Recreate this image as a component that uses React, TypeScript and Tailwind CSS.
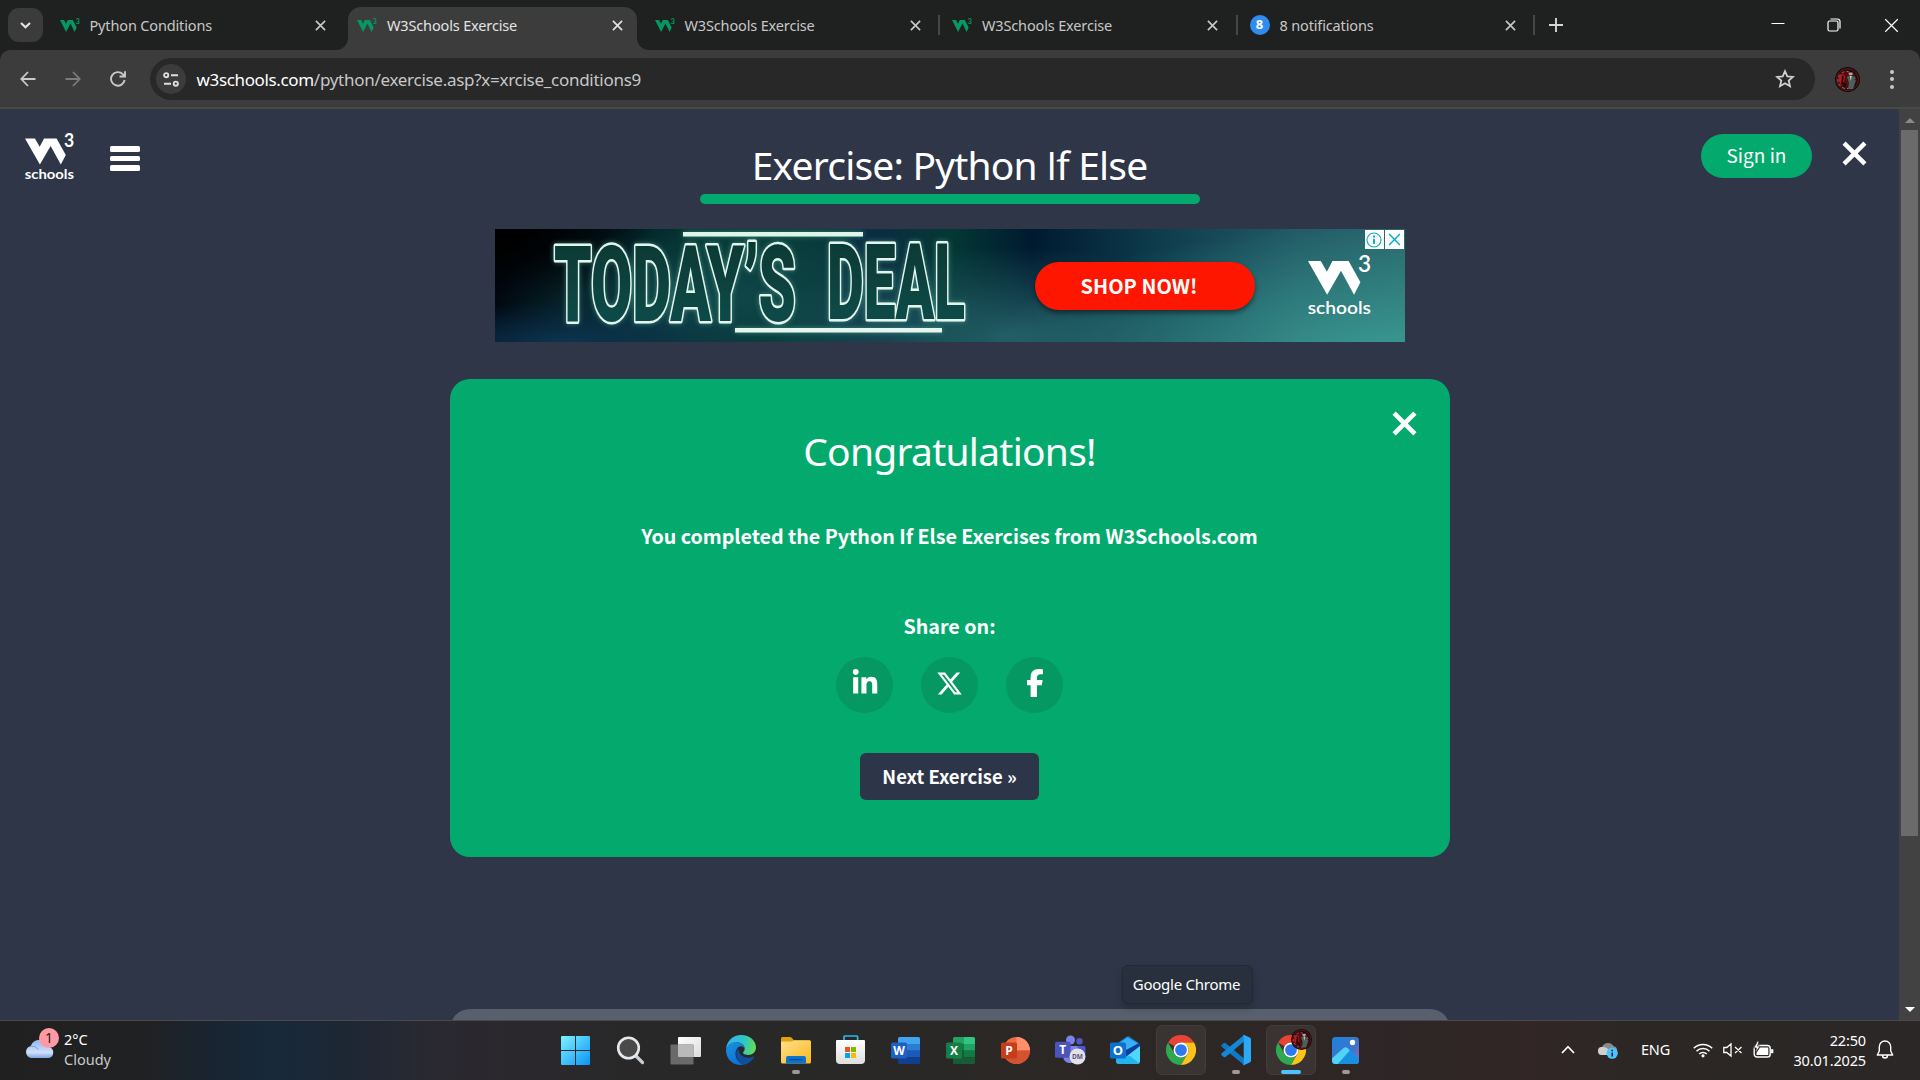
import React from "react";
import { FaXTwitter, FaFacebookF, FaLinkedinIn } from "react-icons/fa6";

const ui = "font-['Noto_Sans',sans-serif]";
const source = "font-['Noto_Sans_CJK_SC',sans-serif]";

function W3Mark({ className, full = false, bold = false }: { className: string; full?: boolean; bold?: boolean }) {
  return (
    <svg className={`overflow-visible ${className}`} viewBox={full ? "0 0 62.5 60" : "0 0 62.5 40"} preserveAspectRatio="none" fill="currentColor">
      <polygon points="0,6 12.7,6 18.7,16.7 24.3,6 40.3,6 52,27.3 45.7,39.7 32.7,15.7 19,39.7" />
      <text x="49.6" y="17.3" fontSize="23.5" fontWeight={bold ? 700 : 600} fontFamily="Lato, sans-serif" textLength="13" lengthAdjust="spacingAndGlyphs">3</text>
      {full && (
        <text x="-0.3" y="59" fontSize="17" fontWeight={bold ? 700 : 600} fontFamily="Lato, sans-serif" textLength="62.8" lengthAdjust="spacingAndGlyphs">schools</text>
      )}
    </svg>
  );
}

function Cross({ className, width = 2 }: { className: string; width?: number }) {
  return (
    <svg className={className} viewBox="0 0 24 24" stroke="currentColor" strokeWidth={width} fill="none">
      <path d="M2 2 22 22M22 2 2 22" />
    </svg>
  );
}

function Tab({ title, active, divider, badge }: { title: string; active?: boolean; divider?: boolean; badge?: boolean }) {
  return (
    <div className="relative h-full w-[297.5px] shrink-0">
      {active && (
        <>
          <div className="absolute left-0 top-[7px] h-[43px] w-[289px] rounded-t-[13px] bg-[#3c3c3c]" />
          <svg className="absolute -left-[12px] bottom-0 h-3 w-3" viewBox="0 0 12 12"><path d="M12 0v12H0A12 12 0 0 0 12 0Z" fill="#3c3c3c" /></svg>
          <svg className="absolute left-[289px] bottom-0 h-3 w-3" viewBox="0 0 12 12"><path d="M0 0v12H12A12 12 0 0 1 0 0Z" fill="#3c3c3c" /></svg>
        </>
      )}
      {divider && <div className="absolute -left-[5px] top-[15px] h-[20px] w-[2px] bg-[#464746]" />}
      <div className={`relative flex h-full items-center pl-[9px] ${active ? "text-[#e3e3e3]" : "text-[#c7c7c7]"}`}>
        {badge ? (
          <div className="flex h-5 w-5 items-center justify-center rounded-full bg-[#2f8cf0] text-[13px] font-bold text-white">8</div>
        ) : (
          <W3Mark bold className="h-[14px] w-5 text-[#059862]" />
        )}
        <span className="ml-[10px] w-[225px] whitespace-nowrap pt-[2px] text-[14.5px] tracking-[-0.15px]">{title}</span>
        <Cross className="h-[11px] w-[11px]" width={3.6} />
      </div>
    </div>
  );
}

function Avatar({ className }: { className: string }) {
  return (
    <svg className={className} viewBox="0 0 25 25">
      <circle cx="12.5" cy="12.5" r="12.5" fill="#140808" />
      <circle cx="12.5" cy="12.5" r="11" fill="#2a0b0e" stroke="#7d1c20" strokeWidth="0.8" />
      <circle cx="11.5" cy="13" r="8.6" fill="#560b0f" stroke="#8f8080" strokeWidth="0.9" strokeDasharray="3 2" />
      <path d="M4 9c3-3 5-2 6 1l-2 9c-3-1-5-5-4-10Z" fill="#c5161b" />
      <path d="m7 8 2 2-1 5 3 2-1 4-4-4Z" fill="#1d0a0c" />
      <circle cx="15.6" cy="6.6" r="2" fill="#c99a92" />
      <path d="M13.6 5.6c0-3 4-3 4.200 0Z" fill="#111" />
      <path d="M12 10c2-2 5-2 7 0l1 6-2 6h-5l1-6Z" fill="#48635f" />
      <path d="M15 9l.8 5 .8-5Z" fill="#dde4e2" />
    </svg>
  );
}

function TitleBar() {
  return (
    <div className="flex h-[50px] shrink-0 bg-[#1f2120]">
      <div className="w-[50.5px] shrink-0 pl-2 pt-2">
        <div className="flex h-[34px] w-[35px] items-center justify-center rounded-[11px] bg-[#3a3b3a]">
          <svg className="h-[7px] w-[11px]" viewBox="0 0 11 7" fill="none" stroke="#e3e3e3" strokeWidth="2.200"><path d="M1 1l4.500 4.300L10 1" /></svg>
        </div>
      </div>
      <Tab title="Python Conditions" />
      <Tab title="W3Schools Exercise" active />
      <Tab title="W3Schools Exercise" />
      <Tab title="W3Schools Exercise" divider />
      <Tab title="8 notifications" divider badge />
      <div className="relative flex flex-1 items-center">
        <div className="absolute -left-[5px] top-[15px] h-[20px] w-[2px] bg-[#464746]" />
        <svg className="ml-[10.500px] h-[14px] w-[14px]" viewBox="0 0 14 14" stroke="#d5d5d5" strokeWidth="1.900"><path d="M7 0v14M0 7h14" /></svg>
        <div className="ml-auto flex text-white">
          <div className="flex w-[57px] justify-center"><svg className="h-[14px] w-[14px]" viewBox="0 0 14 14" stroke="#fff" strokeWidth="1"><path d="M.500 5.500h13" /></svg></div>
          <div className="flex w-[57px] justify-center pr-[2px]">
            <svg className="h-[14px] w-[14px]" viewBox="0 0 14 14" fill="none" stroke="#fff" strokeWidth="1.200"><rect x="1" y="3" width="10" height="10" rx="1.500" /><path d="M3.500 1h7A2.500 2.500 0 0 1 13 3.500v7" /></svg>
          </div>
          <div className="flex w-[57px] justify-center"><Cross className="h-[15px] w-[15px]" width={1.9} /></div>
        </div>
      </div>
    </div>
  );
}

function Toolbar() {
  return (
    <div className="h-[59px] shrink-0 bg-[#1f2120]">
      <div className="flex h-full items-start rounded-t-[10px] border-b-2 border-[#474a45] bg-[#3c3c3c] pt-2">
        <div className="flex h-[42px] w-[150px] items-center pl-[5px]">
          <div className="flex w-[45px] justify-center">
            <svg className="h-4 w-4" viewBox="0 0 16 16" fill="none" stroke="#c9c9c9" strokeWidth="1.800"><path d="M15.500 8H1.500M8 1 1.300 8 8 15" /></svg>
          </div>
          <div className="flex w-[45px] justify-center">
            <svg className="h-4 w-4" viewBox="0 0 16 16" fill="none" stroke="#7b7b7b" strokeWidth="1.800"><path d="M.500 8H14.500M8 1l6.700 7L8 15" /></svg>
          </div>
          <div className="flex w-[45px] justify-center">
            <svg className="h-4 w-4" viewBox="0 0 16 16" fill="none" stroke="#c9c9c9" strokeWidth="1.900"><path d="M14.600 9A6.800 6.800 0 1 1 12.800 3.200L15 5.300M15 .300v5.200H9.500" /></svg>
          </div>
        </div>
        <div className="flex h-[42px] w-[1665px] items-center rounded-full bg-[#282828] pl-[6px] pr-[20px]">
          <div className="flex h-[30px] w-[30px] items-center justify-center rounded-full bg-[#3c3c3c]">
            <svg className="h-[15px] w-[16px]" viewBox="0 0 16 15" fill="none" stroke="#dedede" strokeWidth="1.900"><circle cx="3.200" cy="3.200" r="2.100" /><path d="M8 3.200h7M1 11.700h7" /><circle cx="12.800" cy="11.700" r="2.100" /></svg>
          </div>
          <div className="ml-[10.500px] whitespace-nowrap pt-[2px] text-[17px] tracking-[-0.28px] text-[#c7c7c7]">
            <span className="tracking-[-0.35px] text-white">w3schools.com</span>/python/exercise.asp?x=xrcise_conditions9
          </div>
          <svg className="ml-auto h-5 w-5" viewBox="0 0 20 20" fill="none" stroke="#d0d0d0" strokeWidth="1.800"><path d="M10 2.200l2.300 5.200 5.700.500-4.300 3.700 1.300 5.600L10 14.300l-5 2.900 1.300-5.600L2 7.900l5.700-.500Z" /></svg>
        </div>
        <div className="flex h-[42px] flex-1 items-center">
          <Avatar className="ml-5 h-[25px] w-[25px]" />
          <div className="ml-[30px] flex flex-col gap-[3.500px]">
            {[0, 1, 2].map((i) => <div key={i} className="h-[4px] w-[4px] rounded-full bg-[#c9c9c9]" />)}
          </div>
        </div>
      </div>
    </div>
  );
}

function Banner() {
  return (
    <div className="relative mx-auto flex h-[113px] w-[910px] shrink-0 overflow-hidden bg-[radial-gradient(420px_130px_at_100%_110%,#3a9992_0%,#3a999200_100%),radial-gradient(160px_80px_at_0%_0%,#000_20%,#0000_100%),radial-gradient(200px_40px_at_8%_100%,#0c3450_0%,#0c345000_100%),radial-gradient(240px_90px_at_56%_95%,#225c64_0%,#225c6400_100%),radial-gradient(220px_75px_at_24%_60%,#11474a_0%,#11474a00_100%),linear-gradient(90deg,#010812_0%,#01161f_12%,#043431_22%,#063b38_34%,#0c2c42_42%,#043834_50%,#001a30_59%,#0d3a4b_72%,#225a65_88%,#28666b_100%)]">
      <svg className="h-[113px] w-[500px] shrink-0" viewBox="0 0 500 113">
        <defs>
          <filter id="neon" filterUnits="userSpaceOnUse" x="0" y="0" width="500" height="113">
            <feGaussianBlur in="SourceGraphic" stdDeviation="2.6" result="b" />
            <feColorMatrix in="b" values="0 0 0 0 .12  0 0 0 0 .62  0 0 0 0 .46  0 0 0 .5 0" result="g" />
            <feMerge><feMergeNode in="g" /><feMergeNode in="SourceGraphic" /></feMerge>
          </filter>
          <linearGradient id="tube" x1="0" y1="0" x2="0" y2="1"><stop stopColor="#04352f" /><stop offset="1" stopColor="#12504f" /></linearGradient>
        </defs>
        <rect x="188" y="3" width="180" height="4.500" fill="#dff5ea" filter="url(#neon)" />
        <rect x="240" y="99" width="207" height="4.500" fill="#e6f5ee" filter="url(#neon)" />
        <g fill="url(#tube)" stroke="#e4f5ee" strokeWidth="5" paintOrder="stroke" strokeLinejoin="round" filter="url(#neon)" fontFamily="Roboto, sans-serif" fontWeight="900" fontSize="105">
          <text x="59" y="92" textLength="242" lengthAdjust="spacingAndGlyphs">TODAY’S</text>
          <text x="332" y="90" textLength="138" lengthAdjust="spacingAndGlyphs">DEAL</text>
        </g>
      </svg>
      <div className={`${source} ml-10 mt-[33px] flex h-[48px] w-[220px] shrink-0 items-center justify-center rounded-full bg-[#ff1600] pr-[11px] text-[20px] font-bold leading-none text-white shadow-[0_3px_5px_#0007]`}>SHOP NOW!</div>
      <W3Mark full className="ml-[53.500px] mt-[26px] h-[60px] w-[63px] shrink-0 text-white" />
      <div className="absolute right-[1px] top-[1px] flex gap-px">
        <div className="flex h-[19px] w-[19px] items-center justify-center bg-white">
          <svg className="h-4 w-4" viewBox="0 0 16 16" fill="none" stroke="#00aecd"><circle cx="8" cy="8" r="7" strokeWidth="1.100" /><path d="M8 6.700V12M8 3.500v1.900" strokeWidth="1.900" /></svg>
        </div>
        <div className="flex h-[19px] w-[19px] items-center justify-center bg-white text-[#00aecd]"><Cross className="h-[13px] w-[13px]" width={2.6} /></div>
      </div>
    </div>
  );
}

function Card() {
  const circle = "flex h-[56px] w-[57px] items-center justify-center rounded-full bg-[#059862] pb-1";
  return (
    <div className="relative mx-auto mt-[37px] flex h-[478px] w-[1000px] shrink-0 flex-col items-center rounded-[20px] bg-[#04aa6d] text-white">
      <Cross className="absolute right-[33px] top-[32px] h-[25px] w-[25px]" width={4.4} />
      <h2 className={`${ui} mt-[47px] h-[50px] text-[39px] font-normal leading-[50px] tracking-[-0.75px]`}>Congratulations!</h2>
      <p className={`${source} mt-[46px] h-[28px] text-[19.700px] font-bold leading-[28px] tracking-[-0.03px]`}>You completed the Python If Else Exercises from W3Schools.com</p>
      <p className={`${source} mt-[62px] h-[28px] text-[19.700px] font-bold leading-[28px]`}>Share on:</p>
      <div className="mt-[17px] flex gap-7">
        <div className={circle}><FaLinkedinIn className="h-[28px] w-[28px]" /></div>
        <div className={circle}><FaXTwitter className="h-[27px] w-[27px]" /></div>
        <div className={circle}><FaFacebookF className="h-[28px] w-[28px]" /></div>
      </div>
      <div className={`${source} mt-[40px] flex h-[47px] w-[179px] items-center justify-center rounded-[6px] bg-[#2d3648] text-[18.500px] font-bold`}>Next Exercise »</div>
    </div>
  );
}

function Page() {
  return (
    <div className="flex h-[911px] shrink-0 bg-[#2e3648]">
      <div className="relative flex w-[1899px] flex-col overflow-hidden">
        <div className="flex h-[120px] shrink-0 items-start justify-between">
          <div className="flex w-[250px] text-white">
            <W3Mark full bold className="ml-[24.500px] mt-[25px] h-[46px] w-[49px]" />
            <div className="ml-[36.500px] mt-[37px] flex flex-col gap-1">
              {[0, 1, 2].map((i) => <div key={i} className="h-[5.500px] w-[30px] rounded-[1.500px] bg-white" />)}
            </div>
          </div>
          <div className="flex w-[500px] flex-col items-center">
            <h1 className={`${ui} mt-[28px] h-[57px] whitespace-nowrap text-[39px] leading-[55px] tracking-[-0.82px] text-white`}>
              Exercise: Python <span className="font-['Open_Sans',sans-serif]">I</span>f Else
            </h1>
            <div className="h-[10px] w-full rounded-[5px] bg-[#04aa6d]" />
          </div>
          <div className="flex w-[250px] justify-end text-white">
            <div className={`${source} mt-[25px] flex h-[44px] w-[111px] items-center justify-center rounded-full bg-[#04aa6d] pb-[2px] text-[19px]`}>Sign in</div>
            <Cross className="ml-[30px] mr-[32px] mt-[32px] h-[25px] w-[25px]" width={4.2} />
          </div>
        </div>
        <Banner />
        <Card />
        <div className="mx-auto mt-[152px] h-[60px] w-[1000px] shrink-0 rounded-t-[20px] bg-[#585f6d]" />
        <div className={`${ui} absolute left-[1122px] top-[856px] flex h-[39px] w-[131px] items-center justify-center rounded-[6px] border border-[#212934] bg-[#29303d] pr-[2px] text-[15px] tracking-[-0.25px] text-white shadow-[0_4px_8px_#0003]`}>Google Chrome</div>
      </div>
      <div className="flex w-[21px] flex-col items-center bg-[#424242]">
        <svg className="mt-[9px] h-[5px] w-[10px]" viewBox="0 0 10 5"><path d="M0 5 5 0l5 5Z" fill="#8a8a8a" /></svg>
        <div className="mt-[7px] h-[706px] w-[17px] bg-[#6b6b6b]" />
        <svg className="mb-[8px] mt-auto h-[5px] w-[10px]" viewBox="0 0 10 5"><path d="M0 0 5 5l5-5Z" fill="#fff" /></svg>
      </div>
    </div>
  );
}

function StartIcon() {
  return (
    <svg className="h-[29px] w-[29px]" viewBox="0 0 29 29">
      <defs><linearGradient id="st" x1="0" y1="0" x2="29" y2="29" gradientUnits="userSpaceOnUse"><stop stopColor="#7df3ff" /><stop offset=".5" stopColor="#45c2fb" /><stop offset="1" stopColor="#0a94f8" /></linearGradient></defs>
      <path fill="url(#st)" d="M1 0h13v14H0V1q0-1 1-1ZM15 0h13q1 0 1 1v13H15ZM0 15h14v14H1q-1 0-1-1ZM15 15h14v13q0 1-1 1H15Z" />
    </svg>
  );
}

function SearchIcon() {
  return (
    <svg className="h-[29px] w-[29px]" viewBox="0 0 29 29" fill="none">
      <path d="m20 20 6.500 6.500" stroke="#c9ced4" strokeWidth="3.200" strokeLinecap="round" />
      <circle cx="12.500" cy="12" r="10.300" fill="#4a4a4a" stroke="#e6e9ec" strokeWidth="2.600" />
    </svg>
  );
}

function TaskViewIcon() {
  return (
    <svg className="h-[29px] w-[31px]" viewBox="0 0 31 29">
      <defs><linearGradient id="tv" x1="0" y1="0" x2="1" y2="1"><stop stopColor="#fff" /><stop offset="1" stopColor="#dcdcdc" /></linearGradient></defs>
      <rect x="8" y="1" width="23" height="20" rx="1" fill="url(#tv)" />
      <rect x="0.500" y="8.500" width="23" height="20" rx="1" fill="#6a6a6a" />
      <path d="M8 8.500h15.500V21H9q-1 0-1-1Z" fill="#b9b9b9" />
    </svg>
  );
}

function EdgeIcon() {
  return (
    <svg className="h-[30px] w-[30px]" viewBox="0 0 30 30">
      <defs>
        <linearGradient id="eg" x1="0" y1="8" x2="30" y2="14" gradientUnits="userSpaceOnUse"><stop stopColor="#33b4ee" /><stop offset=".55" stopColor="#2dc4c8" /><stop offset="1" stopColor="#66e04a" /></linearGradient>
        <linearGradient id="eb" x1="0" y1="10" x2="14" y2="30" gradientUnits="userSpaceOnUse"><stop stopColor="#1b8ee0" /><stop offset="1" stopColor="#0a6fd2" /></linearGradient>
      </defs>
      <path d="M0 14.500C.500 6 7 0 15.200 0 24 0 30 6 30 12.500c0 4.500-3.500 7.500-7.800 7.500-3 0-5.200-1-5.200-2.200 0-1 1.700-1.500 1.700-4C18.700 9 13 6.500 9 7.300 4.500 8.200 1 11 0 14.500Z" fill="url(#eg)" />
      <path d="M0 15C.300 10.500 5 7 9.800 7c4.700 0 8.900 3 8.900 6.800-.700-1.600-2-2.500-3.600-2.500-3 0-5.600 3-5.600 7.700 0 5 4 9.500 8.500 10.500C8.500 32 0 25 0 15Z" fill="url(#eb)" />
      <path d="M12 13c-4 6-1 15 6 16.500 4-.700 8-3.500 10-7.300.300-.700-.300-1-1-.700-5 2.600-11.500.800-14-4.500-.500-1.300-.500-2.600-1-4Z" fill="#104f9e" />
    </svg>
  );
}

function ExplorerIcon() {
  return (
    <svg className="h-[28px] w-[30px]" viewBox="0 0 30 28">
      <defs><linearGradient id="ex" x1="0" y1="0" x2="1" y2="1"><stop stopColor="#ffe08a" /><stop offset="1" stopColor="#fbb81e" /></linearGradient></defs>
      <path d="M0 2.500Q0 1 1.500 1H9q1 0 2 1l2 2.500h15.500Q30 4.500 30 6v4H0Z" fill="#e2a00c" />
      <path d="M0 5.500h11l2-1.300h15.500q1.500 0 1.500 1.500V26q0 1.500-1.500 1.500h-27Q0 27.500 0 26Z" fill="url(#ex)" />
      <path d="M5 27.500V22q0-2 2-2h16q2 0 2 2v5.500Z" fill="#0c74cf" />
      <path d="M9 23.600h12" stroke="#084d93" strokeWidth="1.300" strokeLinecap="round" />
    </svg>
  );
}

function StoreIcon() {
  return (
    <svg className="h-[30px] w-[29px]" viewBox="0 0 29 30">
      <defs><linearGradient id="so" x1="0" y1="0" x2="0" y2="1"><stop stopColor="#fff" /><stop offset="1" stopColor="#dedede" /></linearGradient></defs>
      <path d="M8 6V1.800Q8 1 8.800 1h12q.800 0 .800.800V6" fill="none" stroke="#2bb9ee" strokeWidth="1.700" />
      <path d="M1 5h27q1 0 1 1v19q0 4-4 4H4q-4 0-4-4V6q0-1 1-1Z" fill="url(#so)" />
      <path d="M9 12h5v5H9Z" fill="#f25022" /><path d="M15 12h5v5h-5Z" fill="#7fba00" /><path d="M9 18h5v5H9Z" fill="#00a4ef" /><path d="M15 18h5v5h-5Z" fill="#ffb900" />
    </svg>
  );
}

function Letter({ c, fill }: { c: string; fill: string }) {
  return (
    <>
      <rect x="0" y="6.500" width="16" height="16" rx="1.600" fill={fill} />
      <text x="8" y="18.800" textAnchor="middle" fontSize="12" fontWeight="700" fontFamily="Open Sans, sans-serif" fill="#fff">{c}</text>
    </>
  );
}

function WordIcon() {
  return (
    <svg className="h-[29px] w-[30px]" viewBox="0 0 30 29">
      <path d="M7 8V2.500Q7 1 8.500 1h19Q29 1 29 2.500V8Z" fill="#41a5ee" /><path d="M7 8h22v6.700H7Z" fill="#2b7cd3" /><path d="M7 14.700h22v6.600H7Z" fill="#185abd" /><path d="M7 21.300h22v5.200q0 1.500-1.500 1.500h-19Q7 28 7 26.500Z" fill="#103f91" />
      <Letter c="W" fill="#1f5fc4" />
    </svg>
  );
}

function ExcelIcon() {
  return (
    <svg className="h-[29px] w-[30px]" viewBox="0 0 30 29">
      <path d="M7 8V2.500Q7 1 8.500 1H18v7Z" fill="#21a366" /><path d="M18 1h9.500Q29 1 29 2.500V8H18Z" fill="#33c481" /><path d="M7 8h11v6.700H7Z" fill="#107c41" /><path d="M18 8h11v6.700H18Z" fill="#21a366" /><path d="M7 14.700h11v6.600H7Z" fill="#185c37" /><path d="M18 14.700h11v6.600H18Z" fill="#107c41" /><path d="M7 21.300h22v5.200q0 1.500-1.500 1.500h-19Q7 28 7 26.500Z" fill="#185c37" />
      <Letter c="X" fill="#128045" />
    </svg>
  );
}

function PowerPointIcon() {
  return (
    <svg className="h-[29px] w-[30px]" viewBox="0 0 30 29">
      <circle cx="15.500" cy="14.500" r="13.500" fill="#ed6c47" /><path d="M15.500 1A13.500 13.500 0 0 1 29 14.500H15.500Z" fill="#ff8f6b" /><path d="M2 14.500h27a13.500 13.500 0 0 1-27 0Z" fill="#d35230" />
      <Letter c="P" fill="#c43e1c" />
    </svg>
  );
}

function TeamsIcon() {
  return (
    <svg className="h-[30px] w-[31px]" viewBox="0 0 31 30">
      <circle cx="15.500" cy="5" r="4.500" fill="#7b83eb" /><circle cx="24.500" cy="6.200" r="3.200" fill="#5059c9" />
      <path d="M20 11h9q1.500 0 1.500 1.500V19a6 6 0 0 1-10 4Z" fill="#5059c9" /><path d="M9 11h13.500v9a7.500 8 0 0 1-14 4Z" fill="#7b83eb" />
      <rect x="0" y="6.800" width="15.500" height="16" rx="1.600" fill="#4b53bc" />
      <text x="7.700" y="19" textAnchor="middle" fontSize="12" fontWeight="700" fontFamily="Open Sans, sans-serif" fill="#fff">T</text>
      <circle cx="22.500" cy="21.500" r="8" fill="#e4e1ee" />
      <text x="22.500" y="24.300" textAnchor="middle" fontSize="7.500" fontWeight="700" fontFamily="Open Sans, sans-serif" textLength="11" lengthAdjust="spacingAndGlyphs" fill="#5c5470">DM</text>
    </svg>
  );
}

function OutlookIcon() {
  return (
    <svg className="h-[30px] w-[31px]" viewBox="0 0 31 30">
      <path d="M5 10 17 1.500Q18 1 19 1.500L30 9v4l-9 8H5Z" fill="#1583dd" />
      <path d="M8 9 17.500 2.500 28 8.500 16 17 8 14Z" fill="#38b0f5" />
      <path d="M16 15 30 7.500V12L18 21h-6Z" fill="#0a3f9c" />
      <path d="M30 11v15q0 3-3 3H10q-3 0-4-2l3-6h8Z" fill="#4fd6fb" /><path d="M6 21h14l9 7q-1 1-2.500 1H9q-3 0-3-3Z" fill="#22b4ef" />
      <rect x="0" y="7.500" width="16" height="16" rx="1.600" fill="#0d6fd0" />
      <text x="8" y="20" textAnchor="middle" fontSize="13" fontWeight="700" fontFamily="Open Sans, sans-serif" fill="#fff">O</text>
    </svg>
  );
}

function ChromeIcon() {
  return (
    <svg className="h-[30px] w-[30px]" viewBox="0 0 48 48">
      <path d="M3.200 12A24 24 0 0 1 44.800 12H24A12 12 0 0 0 13.600 18Z" fill="#ea4335" />
      <path d="M3.200 12 13.600 30A12 12 0 0 0 34.400 30L24 48A24 24 0 0 1 3.200 12Z" fill="#2da94f" />
      <path d="M44.800 12A24 24 0 0 1 24 48L34.400 30A12 12 0 0 0 34.400 18L24 12Z" fill="#fdc318" />
      <circle cx="24" cy="24" r="12" fill="#fff" /><circle cx="24" cy="24" r="9.400" fill="#2f78ee" />
    </svg>
  );
}

function CodeIcon() {
  return (
    <svg className="h-[32px] w-[30px]" viewBox="0 0 30 32">
      <path d="M.700 10.800 2.800 9q.800-.600 1.700 0L23 24.500V31L.700 12.800q-.900-1 0-2Z" fill="#1079c4" />
      <path d="M.700 21.200 2.800 23q.800.600 1.700 0L23 7.500V1L.700 19.200q-.900 1 0 2Z" fill="#1488d8" />
      <path d="M21.500 1q.800-.500 1.800 0l5.400 2.500Q30 4 30 5.200v21.600q0 1.200-1.300 1.700L23.300 31q-1 .500-1.800 0 1.200 0 1.200-1.500v-27Q22.700 1 21.500 1Z" fill="#2aaaf3" />
    </svg>
  );
}

function PhotosIcon() {
  return (
    <svg className="h-[27px] w-[27px]" viewBox="0 0 27 27">
      <defs>
        <linearGradient id="ph" x1="0" y1="0" x2="1" y2="1"><stop stopColor="#1a83dd" /><stop offset=".6" stopColor="#3f74c9" /><stop offset="1" stopColor="#a264c4" /></linearGradient>
        <clipPath id="pc"><rect width="27" height="27" rx="3.500" /></clipPath>
      </defs>
      <g clipPath="url(#pc)">
        <rect width="27" height="27" fill="url(#ph)" />
        <path d="M3 27 15 12q-1-1.500 1.500 0L27 22.500V27Z" fill="#1593e3" />
        <path d="M0 21.500 11.500 11q2-1.700 4 0l2.500 2.500L6 27H0Z" fill="#4fd3f7" />
        <path d="M15.500 11l11.500 10v6H6L18 13.500Z" fill="#1790e2" />
        <circle cx="20.500" cy="5.500" r="2.700" fill="#fff" />
      </g>
    </svg>
  );
}

function Cell({ children, hot, mark }: { children: React.ReactNode; hot?: boolean; mark?: "gray" | "blue" }) {
  return (
    <div className="relative flex h-[59px] w-[55px] items-center justify-center">
      {hot && <div className="absolute left-[2.500px] top-[4px] h-[50px] w-[50px] rounded-[6px] border border-[#413c3a] bg-[#393432]" />}
      <div className="relative pb-px">{children}</div>
      {mark === "gray" && <div className="absolute bottom-[6px] h-[4px] w-[8px] rounded-full bg-[#9d9b9a]" />}
      {mark === "blue" && <div className="absolute bottom-[6px] h-[4px] w-[20px] rounded-full bg-[#4cc2ff]" />}
    </div>
  );
}

function Taskbar() {
  return (
    <div className="relative flex h-[60px] shrink-0 justify-between border-t border-[#4b4a49] bg-[linear-gradient(90deg,#202020_0px,#202123_150px,#192430_210px,#18293a_270px,#1c2734_340px,#2a2931_430px,#2b282e_500px,#282828_640px,#292827_900px,#2c2724_1100px,#2e2626_1400px,#322626_1530px,#2c2725_1620px,#2a2726_1920px)] text-[14.500px] text-white">
      <div className="flex w-[548px]">
        <div className="relative ml-[25px] mt-[15px] h-[30px] w-[34px]">
          <svg className="h-[22px] w-[30px]" viewBox="0 0 30 22">
            <defs><linearGradient id="cl" x1="0" y1="0" x2="0" y2="1"><stop stopColor="#8fb6f2" /><stop offset=".7" stopColor="#cfe0fa" /><stop offset="1" stopColor="#7fa4ea" /></linearGradient></defs>
            <path d="M6 22a6 6 0 0 1-.500-11.700A10 10 0 0 1 24.500 11 5.800 5.800 0 0 1 24 22Z" fill="url(#cl)" />
            <path d="M5.500 10.300q5-1 8 3" fill="none" stroke="#7da2e6" strokeWidth="1" />
          </svg>
          <div className="absolute -top-[8px] left-[14px] flex h-5 w-5 items-center justify-center rounded-full bg-[#ff99a4] text-[14px] leading-none text-[#2a1a1c]">1</div>
        </div>
        <div className="ml-[5px] mt-[8px] leading-5">
          <div>2°C</div>
          <div className="text-[#c9c9c9]">Cloudy</div>
        </div>
      </div>
      <div className="flex flex-1">
        <Cell><StartIcon /></Cell>
        <Cell><SearchIcon /></Cell>
        <Cell><TaskViewIcon /></Cell>
        <Cell><EdgeIcon /></Cell>
        <Cell mark="gray"><ExplorerIcon /></Cell>
        <Cell><StoreIcon /></Cell>
        <Cell><WordIcon /></Cell>
        <Cell><ExcelIcon /></Cell>
        <Cell><PowerPointIcon /></Cell>
        <Cell><TeamsIcon /></Cell>
        <Cell><OutlookIcon /></Cell>
        <Cell hot><ChromeIcon /></Cell>
        <Cell mark="gray"><CodeIcon /></Cell>
        <Cell hot mark="blue">
          <ChromeIcon />
          <Avatar className="absolute -right-[6px] -top-[6px] h-[21px] w-[21px]" />
        </Cell>
        <Cell mark="gray"><PhotosIcon /></Cell>
      </div>
      <div className="flex items-center pb-[2px]">
        <svg className="h-[9px] w-[14px]" viewBox="0 0 14 9" fill="none" stroke="#fff" strokeWidth="1.800"><path d="m1 8 6-6.300L13 8" /></svg>
        <svg className="ml-[23px] mt-[2px] h-[17px] w-[20px]" viewBox="0 0 20 17">
          <path d="M4 13a4 4 0 0 1 0-8A6.500 6.500 0 0 1 15.500 4a4.500 4.500 0 0 1 2 8L16 13Z" fill="#8b8b8b" /><path d="M4 13a4 4 0 0 1 0-8q4-.500 6 2l5 2v4Z" fill="#cfcfcf" />
          <circle cx="14.200" cy="11.200" r="5.600" fill="#4cc2ff" /><path d="M14.200 10.500v4M14.200 7.800v1.500" stroke="#1b2a33" strokeWidth="1.600" />
        </svg>
        <span className="ml-[23.500px] w-[30px] tracking-[-0.2px]">ENG</span>
        <svg className="ml-[22px] h-[16px] w-[20px]" viewBox="0 0 20 16" fill="none" stroke="#fff" strokeWidth="1.500">
          <path d="M.800 6.300a13 13 0 0 1 18.400 0M3.500 9.200a9.200 9.200 0 0 1 13 0M6.200 12a5.400 5.400 0 0 1 7.600 0" /><circle cx="10" cy="13.800" r="1.600" fill="#fff" stroke="none" />
        </svg>
        <svg className="ml-[10px] h-[16px] w-[20px]" viewBox="0 0 20 16" fill="none" stroke="#fff" strokeWidth="1.300">
          <path d="M.800 5.500h3L8 2v12l-4.200-3.500h-3ZM12 5l6.500 6M18.500 5 12 11" />
        </svg>
        <svg className="ml-[10px] h-[18px] w-[21px]" viewBox="0 0 21 18" fill="none" stroke="#fff" strokeWidth="1.400">
          <rect x="1.200" y="4.500" width="16" height="11.500" rx="2.800" /><path d="M7 6.500h8.300V14H3.500v-2Z" fill="#fff" stroke="none" /><path d="M19.200 8.200v4" strokeWidth="2.200" /><path d="M4.500 0 .800 7h2.600L2.500 11.500 7.200 5H4.500L6 .500Z" fill="#fff" stroke="#2b2725" strokeWidth=".7" />
        </svg>
        <div className="ml-[10px] w-[82px] text-right leading-5 tracking-[-0.15px]">
          <div>22:50</div>
          <div>30.01.2025</div>
        </div>
        <svg className="ml-[10px] mr-[26px] h-[19px] w-[18px]" viewBox="0 0 18 19" fill="none" stroke="#fff" strokeWidth="1.400">
          <path d="M9 1C5.600 1 3.300 3.600 3.300 6.800v4.200L1.300 15h15.400l-2-4V6.800C14.700 3.600 12.400 1 9 1ZM6.500 15.500a2.500 2.500 0 0 0 5 0" strokeLinejoin="round" />
        </svg>
      </div>
    </div>
  );
}

export default function App() {
  return (
    <div className={`${ui} flex h-[1080px] w-[1920px] flex-col overflow-hidden bg-[#2e3648]`}>
      <TitleBar />
      <Toolbar />
      <Page />
      <Taskbar />
    </div>
  );
}
